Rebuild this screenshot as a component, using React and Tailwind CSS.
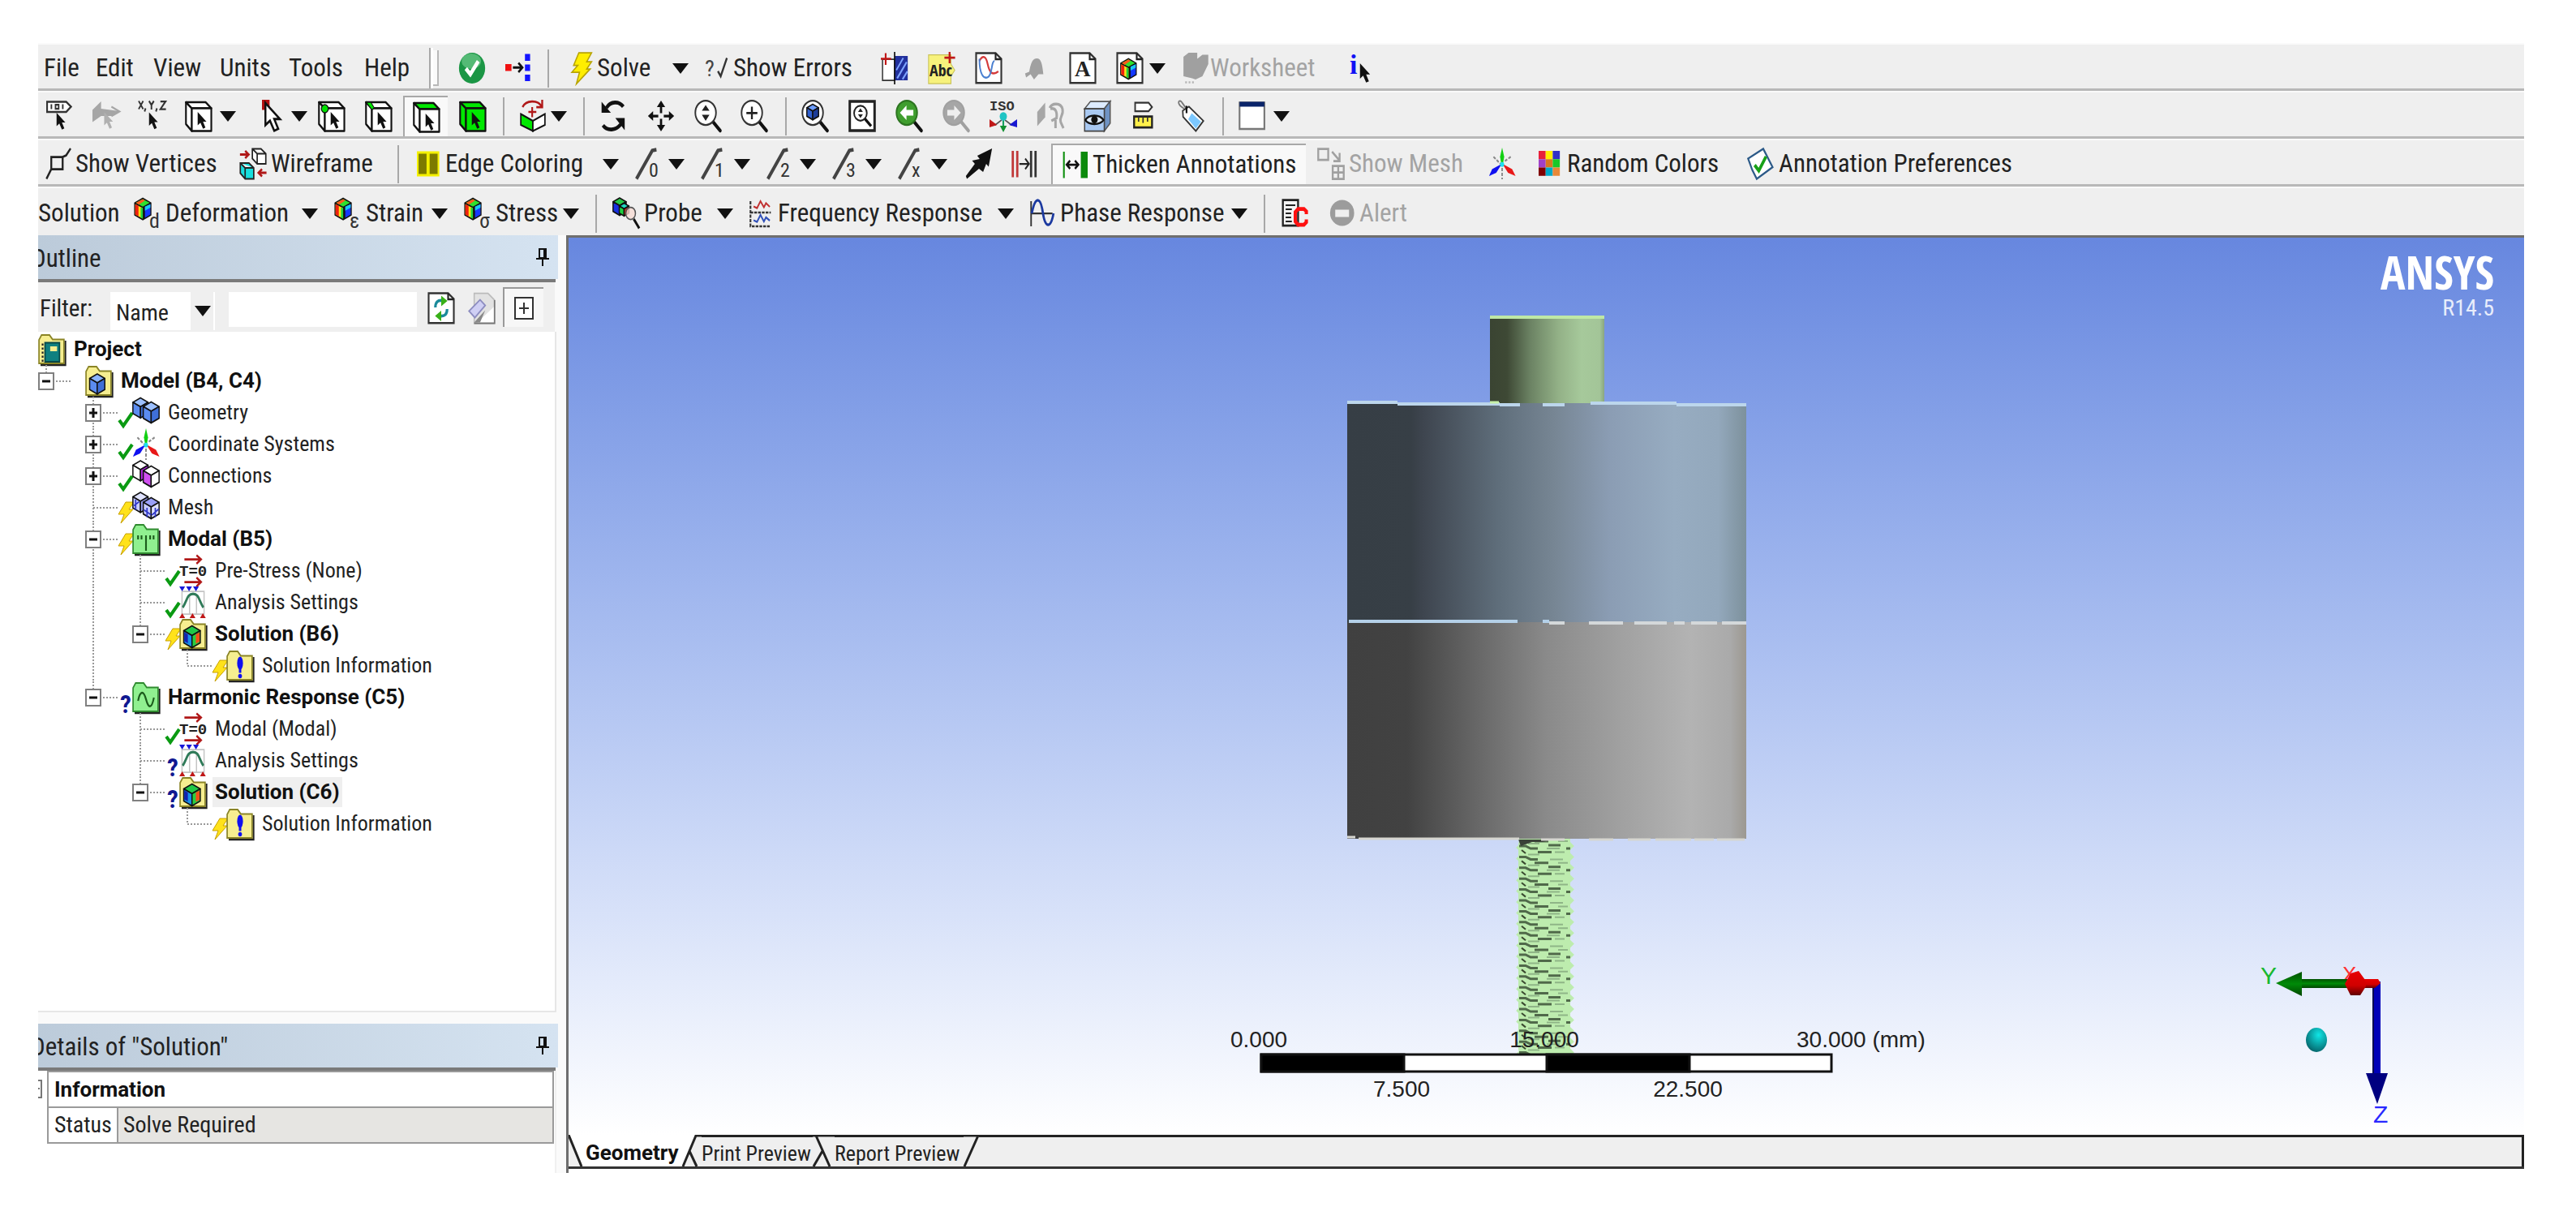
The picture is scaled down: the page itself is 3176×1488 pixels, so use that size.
import React, { useState } from "react";
import clsx from "clsx";

const UI = "font-['Roboto_Condensed','Open_Sans',sans-serif]";

/* Icons are drawn on a 16 x 16 grid, letters on top of it in plain pixels */
const Ico = ({ children, letters, className }) => (
  <svg viewBox="0 0 34 40" aria-hidden="true" className={clsx("w-[34px] h-[40px] shrink-0 overflow-visible", className)}>
    <g transform="scale(2.125 2.5)">{children}</g>
    {letters}
  </svg>
);

const Cursor = ({ x = 0, y = 0, fill = "#111", stroke = "none", s = 1 }) => (
  <path
    transform={`translate(${x} ${y}) scale(${s})`}
    d="M0 0v6.6l1.6-1.3 1.5 3 1.4-.6-1.4-2.9h2z"
    fill={fill}
    stroke={stroke}
    strokeWidth="0.7"
  />
);

const Cube = ({ x = 0, y = 0, s = 1, t = "#9cc0ff", l = "#5b8cf0", r = "#3f6fd8", stroke = "#111" }) => (
  <g transform={`translate(${x} ${y}) scale(${s})`} stroke={stroke} strokeWidth={0.7 / s} strokeLinejoin="round">
    <polygon points="4,0 8,2 4,4 0,2" fill={t} />
    <polygon points="0,2 4,4 4,9 0,7" fill={l} />
    <polygon points="8,2 4,4 4,9 8,7" fill={r} />
  </g>
);

const RainbowCube = ({ x = 0, y = 0, s = 1 }) => (
  <g transform={`translate(${x} ${y}) scale(${s})`}>
    <polygon points="4,0 8,2 8,7 4,9 0,7 0,2" fill="#111" />
    <polygon points="4,.6 7.2,2.1 4,3.6 .8,2.1" fill="#2ee02e" />
    <polygon points="4,.6 .8,2.1 2.2,2.8 5,1.2" fill="#ff5a1a" />
    <polygon points="5,3.6 7.5,2.6 7.5,6.7 5,8" fill="#1438ff" />
    <polygon points="5,3.6 7.5,2.6 7.5,4 5,5.2" fill="#18c8f0" />
    <polygon points=".5,2.6 4,4.2 4,8.3 .5,6.7" fill="#ffe11a" />
    <polygon points=".5,2.6 2,3.3 2,7.4 .5,6.7" fill="#f02010" />
    <polygon points="3,3.9 4,4.2 4,8.3 3,7.9" fill="#1fd43a" />
  </g>
);

const BoxOutline = ({ fill = "#fff", side = "#fff", top = "#fff" }) => (
  <g stroke="#111" strokeWidth="1" strokeLinejoin="round">
    <path d="M.6 1.2 4 4.2V15.4L.6 12Z" fill={side} />
    <path d="M.6 1.2H12L15.3 4.2H4Z" fill={top} />
    <path d="M4 4.2H15.3V15.4H4Z" fill={fill} />
  </g>
);

const Lens = ({ children, fill = "#fff", stroke = "#333", handle = "#111" }) => (
  <Ico>
    <path d="M10.5 10.5 15 15.2" stroke={handle} strokeWidth="1.8" strokeLinecap="round" />
    <ellipse cx="6.6" cy="6.4" rx="6" ry="6" fill={fill} stroke={stroke} strokeWidth="0.9" />
    {children}
  </Ico>
);

const Page = ({ children, letters }) => (
  <Ico letters={letters}>
    <path d="M.7.6H12L15.3 3.4V15.3H.7Z" fill="#fff" stroke="#333" strokeWidth="1" />
    <path d="M12 .6V3.6H15.3" fill="none" stroke="#222" strokeWidth="1" />
    {children}
  </Ico>
);

const Triad = () => (
  <>
    <path d="M3 4.5 7 8M13 4.5 9 7M8 10v5.6" stroke="#888" strokeWidth="0.9" strokeDasharray="1.6 .8" />
    <path d="M8 0 9.2 4.5 8.5 8h-1L6.8 4.5Z" fill="#12d012" />
    <path d="M7.8 8 4.6 12.4.4 14 2.2 10.6Z" fill="#1010f0" />
    <path d="M8.2 8 11.4 12.4 15.8 14 13.8 10.6Z" fill="#e81818" />
    <circle cx="8" cy="8.3" r="1.2" fill="#20dff0" />
  </>
);

const CheckIcon = () => (
  <Ico>
    <circle cx="8" cy="8" r="7.6" fill="#1b9645" />
    <ellipse cx="7.6" cy="4.6" rx="5.6" ry="3.8" fill="#6cc98a" opacity="0.7" />
    <path d="M4.4 8.2 7 11 11.6 4.6" fill="none" stroke="#fff" strokeWidth="2" />
  </Ico>
);

const FlowIcon = () => (
  <Ico>
    <path d="M0 6h3.6v3.4H0Z" fill="#f01010" />
    <path d="M4.4 7.7H9.6M7.6 5.4 9.9 7.7 7.6 10" fill="none" stroke="#111" strokeWidth="1.2" />
    <path d="M11.4 1h3v3.4h-3ZM11.4 6.2h3v3.2h-3ZM11.4 11.2h3v3.2h-3Z" fill="#1515ff" />
  </Ico>
);

const BoltIcon = () => (
  <Ico className="-mr-[6px]">
    <path d="M5 .4H12.4L9.6 4.8H12.4L9.6 8.4H11.6L3.6 15.8 5.4 10H1L4.4 6.6H2Z" fill="#ffee00" stroke="#b8a400" strokeWidth="0.7" />
  </Ico>
);

const ErrorsIcon = () => (
  <Ico className="-mr-1" letters={<text x="0" y="30" fontSize="28" fill="#444">?</text>}>
    <path d="M7.6 9.5 9.2 12 12.8 3" fill="none" stroke="#333" strokeWidth="1.1" />
  </Ico>
);

const SectionIcon = () => (
  <Ico>
    <path d="M1 3.6H8V14H1Z" fill="#fff" stroke="#333" strokeWidth="0.7" />
    <path d="M8 2H15.6V14H8Z" fill="#22309c" />
    <path d="M9 9 13 3M9.5 13 15 5M12.6 13.5 15.4 9.6" stroke="#7fa4ff" strokeWidth="0.9" />
    <path d="M8 0V16" stroke="#111" strokeWidth="0.8" />
    <path d="M2.8.6V6.4M0 3.4H6" stroke="#c01818" strokeWidth="1" />
  </Ico>
);

const AbcIcon = () => (
  <Ico letters={<text x="2" y="30" fontSize="20" fontWeight="700" fill="#222" className="font-['Open_Sans_Condensed','Open_Sans',sans-serif]">Abc</text>}>
    <path d="M.4 1.4H13.4V6L15.6 9 13.4 12V15.6H.4Z" fill="#f7f27c" stroke="#c9c25a" strokeWidth="0.5" />
    <path d="M12.6 0V5.6M9.6 2.8H15.8" stroke="#c01818" strokeWidth="1.1" />
  </Ico>
);

const ChartIcon = () => (
  <Page>
    <path d="M2.6 4.4C4.6 1.4 6.4 2 7.4 6S10 12 13.6 9.6" fill="none" stroke="#d43a3a" strokeWidth="1" />
    <path d="M2.6 3.4C2.6 11 5 13.6 7.6 12.4S9.4 4.6 11.4 4.4" fill="none" stroke="#4a7fd0" strokeWidth="0.9" />
  </Page>
);

const GrayBellIcon = () => (
  <Ico>
    <path d="M8.6 3.2c2.6 0 3.2 3 3.8 7.8H9.6L7 13.6 5 11 2.4 12.6 1.8 10.6 4.2 9.8C5 6 6 3.2 8.6 3.2Z" fill="#a0a0a0" />
  </Ico>
);

const LetterIcon = () => (
  <Page letters={<text x="7" y="30" fontSize="27" fontWeight="700" fill="#222" className="font-['Liberation_Serif',serif]">A</text>} />
);

const ColorPageIcon = () => (
  <Page>
    <RainbowCube x={2.4} y={3} s={1.2} />
  </Page>
);

const WorksheetIcon = () => (
  <Ico className="-mr-1">
    <path d="M1 2.4 4 .4H9V3.4L12 1.4H15.4V6L12 12 8 13.6 6 13 1 12Z" fill="#a0a0a0" />
    <path d="M2 15H8" stroke="#b5b5b5" strokeDasharray="1 1" />
  </Ico>
);

const InfoIcon = () => (
  <Ico letters={<text x="0" y="27" fontSize="34" fontWeight="700" fill="#1212f5" className="font-['Liberation_Serif',serif]">i</text>}>
    <Cursor x={6} y={5.6} s={1.15} />
  </Ico>
);

const TagCursorIcon = () => (
  <Ico>
    <path d="M.5 1H11.6L14.4 3.4 11.6 6H.5Z" fill="#fff" stroke="#333" strokeWidth="1" />
    <path d="M3 2.2v2.4M9.6 2.2v2.4M5.4 2.4h1.8v2H5.4Z" fill="none" stroke="#333" strokeWidth="0.9" />
    <Cursor x={6} y={6.4} />
  </Ico>
);

const GrayCursorIcon = () => (
  <Ico>
    <path d="M0 5 5 .8V4.4L15.6 5.6 12 8H5L0 11Z" fill="#a6a6a6" />
    <path d="M11 3.4 15.6 5.8 11 8" fill="none" stroke="#a6a6a6" />
    <Cursor x={6.8} y={6} fill="#b0b0b0" />
  </Ico>
);

const XyzIcon = () => (
  <Ico>
    <path d="M0 .6 2.6 4.6M2.6.6 0 4.6M6 .6 7.4 2.6 8.8.6M7.4 2.6V4.8M12.6.8H15.6L12.6 4.6H15.8M4 4.2 3.4 5.8M10.6 4.2 10 5.8" fill="none" stroke="#333" strokeWidth="0.9" />
    <Cursor x={6} y={6.2} />
  </Ico>
);

const BoxCursorIcon = () => (
  <Ico>
    <BoxOutline />
    <Cursor x={7.4} y={6} />
  </Ico>
);

const RedCursorIcon = () => (
  <Ico className="-mr-[3px]">
    <path d="M0 0H4.4V5H0Z" fill="#b01010" />
    <Cursor x={2} y={1.6} s={1.65} fill="#fff" stroke="#111" />
  </Ico>
);

const VertexIcon = () => (
  <Ico>
    <BoxOutline />
    <Cursor x={7.4} y={6} />
    <circle cx="4" cy="4.4" r="2" fill="#00e000" stroke="#111" strokeWidth="0.6" />
  </Ico>
);

const EdgeIcon = () => (
  <Ico>
    <BoxOutline />
    <path d="M.6 1.2H3.4L5.4 4 4 5Z" fill="#00e000" stroke="#111" strokeWidth="0.5" />
    <Cursor x={7.4} y={6} />
  </Ico>
);

const FaceIcon = () => (
  <Ico>
    <BoxOutline top="#00e800" />
    <Cursor x={7.4} y={6.4} />
  </Ico>
);

const BodyIcon = () => (
  <Ico>
    <BoxOutline fill="#00e800" side="#00e800" top="#00e800" />
    <Cursor x={7.4} y={6} />
  </Ico>
);

const ExtendIcon = () => (
  <Ico>
    <path d="M1 7 8 10.4V15.4L1 12.4Z" fill="#00e800" stroke="#111" strokeWidth="0.8" />
    <path d="M15 7 8 10.4V15.4L15 12.4Z" fill="#fff" stroke="#111" strokeWidth="0.8" />
    <path d="M2 3.6C4 0 11 0 13 3.2M13.4 0V3.6H10" fill="none" stroke="#b01818" strokeWidth="1.1" />
    <path d="M7.6 3.6v5M5.4 6h4.6" stroke="#b01818" strokeWidth="1" />
  </Ico>
);

const RotateIcon = () => (
  <Ico>
    <path d="M13.4 3.4C11 .6 6 .6 3.6 4" fill="none" stroke="#111" strokeWidth="1.9" />
    <path d="M.8 1V6.4H6.2Z" fill="#111" />
    <path d="M1.6 12.6C4 15.4 9 15.4 12 12" fill="none" stroke="#111" strokeWidth="1.9" />
    <path d="M14.2 15V9H8.8Z" fill="#111" />
  </Ico>
);

const PanIcon = () => (
  <Ico>
    <path d="M8 .4 10.4 3.6H5.6ZM8 15.6 10.4 12.4H5.6ZM.4 8 3.4 5.6V10.4ZM15.6 8 12.6 5.6V10.4Z" fill="#111" />
    <path d="M8 3v3.6M8 9.4V13M3 8h3.4M9.6 8H13" stroke="#111" strokeWidth="1.3" />
  </Ico>
);

const ZoomIcon = () => (
  <Lens>
    <path d="M6.6 2.6 8.8 5.4H4.4ZM6.6 10.4 8.8 7.4H4.4Z" fill="#222" />
  </Lens>
);

const ZoomPlusIcon = () => (
  <Lens>
    <path d="M6.6 3.4v6.2M3.4 6.5h6.4" stroke="#222" strokeWidth="1.1" />
  </Lens>
);

const ZoomFitIcon = () => (
  <Lens>
    <Cube x={3.2} y={2.2} s={0.85} l="#3060d0" r="#1c3c98" t="#6c9cff" />
  </Lens>
);

const ZoomBoxIcon = () => (
  <Ico>
    <path d="M.8.8H15.2V15.2H.8Z" fill="#fff" stroke="#222" strokeWidth="1.4" />
    <circle cx="7" cy="6.6" r="3.7" fill="#fff" stroke="#222" strokeWidth="0.9" />
    <path d="M9.6 9.4 13.2 13" stroke="#111" strokeWidth="1.5" />
    <path d="M7 4.2 8.4 6H5.6ZM7 9 8.4 7.2H5.6Z" fill="#222" />
  </Ico>
);

const ZoomBackIcon = () => (
  <Lens fill="#3f9e2e" stroke="#2c7420">
    <path d="M2.6 6.4 6.4 2.8V5H10.4V7.8H6.4V10Z" fill="#fff" />
  </Lens>
);

const ZoomNextIcon = () => (
  <Lens fill="#a6a6a6" stroke="#a0a0a0" handle="#a0a0a0">
    <path d="M10.6 6.4 6.8 2.8V5H2.8V7.8H6.8V10Z" fill="#efefef" />
  </Lens>
);

const IsoIcon = () => (
  <Ico letters={<text x="0" y="13" fontSize="17" fontWeight="700" fill="#333" className="font-['Liberation_Mono',monospace]">ISO</text>}>
    <path d="M8 8V14" stroke="#18a060" strokeWidth="1" />
    <path d="M8 16 6 12.8H10Z" fill="#109030" />
    <path d="M7 10 3 12.6M9 10 13 12.6" stroke="#555" strokeWidth="0.8" />
    <path d="M16 9.6V13.6L11.4 12.4Z" fill="#1818d0" />
    <path d="M0 9.6V13.6L4.4 12.4Z" fill="#c01818" />
    <circle cx="8" cy="8.2" r="2.1" fill="#1fc4c4" />
  </Ico>
);

const GrayLookIcon = () => (
  <Ico>
    <path d="M.4 6 5 1.4V8.6L.4 13Z" fill="#a6a6a6" />
    <path d="M7.6 4C9 1.4 14 1.4 15 4.4 16 8 13 8 14 11l1.6 3M8 4.4c3-.6 4 1.4 3.6 4.6l-3 1.4M11 10v4" fill="none" stroke="#a6a6a6" strokeWidth="1.4" />
  </Ico>
);

const EyeBoxIcon = () => (
  <Ico>
    <path d="M.6 4.4 4 .8H15.4L12 4.4Z" fill="#dcebff" stroke="#555" strokeWidth="0.7" />
    <path d="M12 4.4 15.4.8V11.6L12 15.4Z" fill="#6f93c4" stroke="#555" strokeWidth="0.7" />
    <path d="M.6 4.4H12V15.4H.6Z" fill="#a9c9f2" stroke="#444" strokeWidth="0.7" />
    <path d="M1 10C3 7 9.4 7 11.6 10 9.4 12.6 3 12.6 1 10Z" fill="#dfeaf8" stroke="#111" strokeWidth="1" />
    <circle cx="6.3" cy="9.8" r="1.9" fill="#111" />
  </Ico>
);

const RulerIcon = () => (
  <Ico>
    <path d="M2.6 1.4H10.4L12.4 3.6 10.4 5.6H2.6Z" fill="#fff" stroke="#333" strokeWidth="0.9" />
    <path d="M2 8.2H12.4V13.6H2Z" fill="#fff04a" stroke="#222" strokeWidth="1.1" />
    <path d="M4.6 8.4v2.4M7.2 8.4v3M9.8 8.4v2.4" stroke="#333" strokeWidth="0.8" />
  </Ico>
);

const TagIcon = () => (
  <Ico>
    <path d="M5 5 2 3C0 1 1.6-.4 3 1.4L6 5" fill="none" stroke="#777" strokeWidth="0.8" />
    <path d="M3.4 5.4 7 3.4 15.4 10.4 11 15.4 3.6 8.4Z" fill="#fff" stroke="#333" strokeWidth="0.8" />
    <path d="M8.6 6.6 14 10.8 11 14.2 6.6 9.6Z" fill="#7cc8ff" />
    <path d="M5.6 3v3.6" stroke="#111" strokeWidth="1" />
  </Ico>
);

const WindowIcon = () => (
  <Ico>
    <path d="M.6 1.4H15V14.4H.6Z" fill="#fff" stroke="#777" strokeWidth="1" />
    <path d="M.6 1H15V3.4H.6Z" fill="#0a246a" />
  </Ico>
);

const VerticesIcon = () => (
  <Ico className="-mr-[2px]">
    <path d="M3.4 4.6H10V10.6H3.4ZM3.4 10.6.6 15.4M10 4.6 12 3.8 14.6.4" fill="none" stroke="#222" strokeWidth="1.1" />
  </Ico>
);

const WireframeIcon = () => (
  <Ico>
    <path d="M.4 3.4H5M3.4 1.6 5.4 3.4 3.4 5.2M15.8 12.4H11.6M13.2 10.6 11.2 12.4 13.2 14.2" fill="none" stroke="#b01818" strokeWidth="1.2" />
    <path d="M7.6.6H12.6L15.4 3V8H10.4L7.6 5.4ZM7.6.6 10.4 3H15.4M10.4 3V8" fill="#fff" stroke="#222" strokeWidth="0.8" />
    <path d="M.6 7.6H5.6L8.4 10V15.4H3.4L.6 12.6ZM.6 7.6 3.4 10H8.4M3.4 10V15.4" fill="#18dede" stroke="#222" strokeWidth="0.8" />
  </Ico>
);

const EdgeColorIcon = () => (
  <Ico className="-mr-1">
    <path d="M0 1.8H13V14.2H0Z" fill="#f4f000" />
    <path d="M1 3H5.6V13H1ZM7.4 3H12V13H7.4Z" fill="#7c7a00" />
  </Ico>
);

const EdgeNumberIcon = ({ n }) => (
  <Ico letters={<text x="17" y="36" fontSize="24" fill="#333">{n}</text>}>
    <path d="M.8 15.4 10 1.4 12.4 1" fill="none" stroke="#444" strokeWidth="1.8" />
  </Ico>
);

const NeedleIcon = () => (
  <Ico>
    <path d="M15.6.4 13.6 9.4 12.2 8 10.4 12 8 10.4 1 15.4.4 14 5.6 8 4 6.4 8.4 5.6 7 4Z" fill="#111" />
  </Ico>
);

const MergeIcon = () => (
  <Ico>
    <path d="M.8 1.6V14.6M3.4 1.6V14.6" stroke="#c03838" strokeWidth="1.3" />
    <path d="M11.4 1.6V14.6M14 1.6V14.6" stroke="#333" strokeWidth="1.3" />
    <path d="M4.6 8H10M8 5.4 10.2 8 8 10.6" fill="none" stroke="#222" strokeWidth="0.9" />
  </Ico>
);

const ThickenIcon = () => (
  <Ico className="-mr-[2px]">
    <path d="M.8 1.6V14.6" stroke="#109010" strokeWidth="1" />
    <path d="M2.6 8H9M4.4 6 2.4 8 4.4 10M7.2 6 9.2 8 7.2 10" fill="none" stroke="#111" strokeWidth="1.1" />
    <path d="M10.6 1.6H14.6V14.6H10.6Z" fill="#0b8a0b" />
  </Ico>
);

const MeshToggleIcon = () => (
  <Ico>
    <path d="M.6.6H6.4V6H.6ZM9 9H15.4V15.4H9ZM12.2 9V15.4M9 12.2H15.4M8.6 2 13 6.4M13 2.6V6.6H9.4" fill="none" stroke="#a0a0a0" strokeWidth="1.1" />
  </Ico>
);

const RandomColorsIcon = () => (
  <Ico className="-mr-1">
    {["#e8203a", "#ffee00", "#3030c8", "#a040c8", "#d87820", "#18c828", "#800000", "#00a8c8", "#e88838"].map((c, i) => (
      <rect key={c} x={(i % 3) * 4.1} y={1.6 + Math.floor(i / 3) * 4.1} width="4.1" height="4.1" fill={c} />
    ))}
  </Ico>
);

const PreferencesIcon = () => (
  <Ico>
    <path d="M.6 5.4 9.4.6 14.8 9.6 5.6 15.4 3 11Z" fill="#fff" stroke="#2c5a88" strokeWidth="1" />
    <path d="M4.4 8.6 6.8 11.4 11 4.4" fill="none" stroke="#18a018" strokeWidth="1.7" />
  </Ico>
);

const ResultIcon = ({ n }) => (
  <Ico letters={<text x="19" y="38" fontSize="26" fill="#333">{n}</text>}>
    <RainbowCube x={0.2} y={0.2} s={1.25} />
  </Ico>
);

const ProbeIcon = () => (
  <Ico>
    <Cube x={0.4} y={0.4} s={0.95} l="#1830e0" t="#28c848" r="#1a9030" />
    <Cube x={4} y={3} s={0.7} l="#20d040" t="#20d8c0" r="#d03020" />
    <ellipse cx="10.6" cy="8" rx="2.8" ry="3" fill="#f6dcd4" fillOpacity="0.8" stroke="#555" strokeWidth="0.7" />
    <path d="M12.4 10.8 15.6 15.4" stroke="#111" strokeWidth="1.3" />
  </Ico>
);

const FrequencyIcon = () => (
  <Ico className="-mr-1">
    <path d="M.6 2V14.4H12.4M.6 7.6H12.4" fill="none" stroke="#333" strokeWidth="1" strokeDasharray="1.6 .6" />
    <path d="M2.4 4.6 4.4 5.4 6.4 2 8.4 5 9.6 3 11.8 4.8" fill="none" stroke="#c03030" strokeWidth="0.9" />
    <path d="M2.4 11.4 4.4 12.2 6.4 8.8 8.4 12 9.6 10 11.8 11.6" fill="none" stroke="#3050b8" strokeWidth="0.9" />
  </Ico>
);

const PhaseIcon = () => (
  <Ico className="-mr-[2px]">
    <path d="M.6 2V14.4M.6 8H13" fill="none" stroke="#333" strokeWidth="0.9" />
    <path d="M1 8C3-.6 6-.4 7.4 7.6S12 15.6 13.6 8" fill="none" stroke="#1c3aa0" strokeWidth="1.3" />
  </Ico>
);

const ClipCIcon = () => (
  <Ico>
    <path d="M.8 1.4H9.6V14H.8Z" fill="#f4f4f4" stroke="#222" strokeWidth="1.1" />
    <path d="M2.4 4H8M2.4 6H6M2.4 8H5.6M2.4 10H5.6M2.4 12H6" stroke="#222" strokeWidth="0.8" />
    <path d="M14.4 8.4V7L13 5.8H9.6L8 7.4V12L9.6 13.6H13L14.4 12.4V11" fill="none" stroke="#ff1010" strokeWidth="1.9" />
  </Ico>
);

const AlertIcon = () => (
  <Ico className="-mr-[2px]">
    <ellipse cx="7.4" cy="7.8" rx="7" ry="6.4" fill="#9c9c9c" />
    <path d="M3.4 6.2H11.4V9.8H3.4Z" fill="#efefef" />
  </Ico>
);

const Arrow = ({ className }) => (
  <svg viewBox="0 0 20 13" aria-hidden="true" className={clsx("w-[20px] h-[13px] shrink-0", className)}>
    <path d="M0 0H20L10 13Z" fill="#111" />
  </svg>
);

const Pin = () => (
  <svg viewBox="0 0 16 22" aria-hidden="true" className="w-[16px] h-[22px]">
    <path d="M4 1H12V12H4ZM0 13H16M8 13V22" fill="none" stroke="#111" strokeWidth="2" />
    <path d="M9 1H13V12H9Z" fill="#111" />
  </svg>
);

const Tool = ({ icon, label, title, menu, disabled, pressed, className }) => (
  <button
    type="button"
    disabled={disabled}
    aria-pressed={pressed}
    aria-label={label ? undefined : title}
    className={clsx(
      "flex items-center gap-[5px] shrink-0 h-full whitespace-nowrap text-[31px] leading-[36px]",
      disabled ? "text-[#a3a3a3]" : "text-[#222]",
      pressed && "bg-[#f9f9f9] border-t-2 border-l-2 border-[#a8a8a8]",
      menu && "pr-5",
      className
    )}
  >
    {icon}
    {label && <span>{label}</span>}
    {menu && <Arrow className="ml-auto" />}
  </button>
);

const Sep = ({ className }) => (
  <div className={clsx("shrink-0 h-[47px] border-l-2 border-[#a8a8a8]", className)} />
);

const Bar = ({ children, className }) => (
  <div
    className={clsx(
      "flex items-center h-[59px] pt-[4px] bg-[#efefef] border-t-2 border-t-[#fafafa] border-b-[3px] border-b-[#b8b8b8] overflow-hidden",
      className
    )}
  >
    {children}
  </div>
);

const menus = [
  ["File", "w-[64px]"],
  ["Edit", "w-[71px]"],
  ["View", "w-[82px]"],
  ["Units", "w-[85px]"],
  ["Tools", "w-[93px]"],
  ["Help", "w-[80px]"],
];

const Toolbars = () => (
  <header>
    <Bar className="pl-[7px]">
      <nav className="flex">
        {menus.map(([name, w]) => (
          <button key={name} type="button" className={clsx("text-left text-[31px] leading-[36px] text-[#222]", w)}>
            {name}
          </button>
        ))}
      </nav>
      <div className="h-full w-[5px] border-l-2 border-[#a8a8a8] bg-white" />
      <div className="h-[44px] w-[7px] mr-[24px] border-r-2 border-b-2 border-[#b8b8b8] bg-[#fafafa]" />
      <Tool icon={<CheckIcon />} title="Ready" className="w-[58px]" />
      <Tool icon={<FlowIcon />} title="Connect" className="w-[52px]" />
      <Sep className="w-[28px]" />
      <Tool icon={<BoltIcon />} label="Solve" menu className="w-[166px]" />
      <Tool icon={<ErrorsIcon />} label="Show Errors" className="w-[217px]" />
      <Tool icon={<SectionIcon />} title="Section plane" className="w-[58px]" />
      <Tool icon={<AbcIcon />} title="Annotation" className="w-[58px]" />
      <Tool icon={<ChartIcon />} title="Chart" className="w-[58px]" />
      <Tool icon={<GrayBellIcon />} title="Comment" disabled className="w-[58px]" />
      <Tool icon={<LetterIcon />} title="Figure text" className="w-[58px]" />
      <Tool icon={<ColorPageIcon />} title="Image" menu className="w-[81px]" />
      <Tool icon={<WorksheetIcon />} label="Worksheet" disabled className="w-[207px]" />
      <Tool icon={<InfoIcon />} title="Selection information" />
    </Bar>

    <Bar className="pl-[10px]">
      <Tool icon={<TagCursorIcon />} title="Label" className="w-[57px]" />
      <Tool icon={<GrayCursorIcon />} title="Direction" disabled className="w-[57px]" />
      <Tool icon={<XyzIcon />} title="Hit point coordinates" className="w-[57px]" />
      <Tool icon={<BoxCursorIcon />} title="Select type" menu className="w-[83px]" />
      <Tool icon={<RedCursorIcon />} title="Select mode" menu className="w-[69px] ml-3" />
      <Tool icon={<VertexIcon />} title="Vertex" className="w-[58px]" />
      <Tool icon={<EdgeIcon />} title="Edge" className="w-[47px]" />
      <Tool icon={<FaceIcon />} title="Face" pressed className="w-[55px] justify-center" />
      <Tool icon={<BodyIcon />} title="Body" className="w-[54px] ml-[14px]" />
      <Sep className="w-[20px]" />
      <Tool icon={<ExtendIcon />} title="Extend" menu className="w-[79px]" />
      <Sep className="w-[21px]" />
      <Tool icon={<RotateIcon />} title="Rotate" className="w-[58px]" />
      <Tool icon={<PanIcon />} title="Pan" className="w-[58px]" />
      <Tool icon={<ZoomIcon />} title="Zoom" className="w-[57px]" />
      <Tool icon={<ZoomPlusIcon />} title="Box zoom" className="w-[55px]" />
      <Sep className="w-[20px]" />
      <Tool icon={<ZoomFitIcon />} title="Zoom to fit" className="w-[58px]" />
      <Tool icon={<ZoomBoxIcon />} title="Magnifier" className="w-[58px]" />
      <Tool icon={<ZoomBackIcon />} title="Previous view" className="w-[58px]" />
      <Tool icon={<ZoomNextIcon />} title="Next view" disabled className="w-[58px]" />
      <Tool icon={<IsoIcon />} title="Isometric view" className="w-[58px]" />
      <Tool icon={<GrayLookIcon />} title="Look at" disabled className="w-[58px]" />
      <Tool icon={<EyeBoxIcon />} title="Manage views" className="w-[58px]" />
      <Tool icon={<RulerIcon />} title="Rescale annotation" className="w-[57px]" />
      <Tool icon={<TagIcon />} title="Tags" className="w-[56px]" />
      <Sep className="w-[20px]" />
      <Tool icon={<WindowIcon />} title="Viewports" menu className="w-[83px]" />
    </Bar>

    <Bar className="pl-[9px]">
      <Tool icon={<VerticesIcon />} label="Show Vertices" className="w-[239px]" />
      <Tool icon={<WireframeIcon />} label="Wireframe" className="w-[195px]" />
      <Sep className="w-[24px]" />
      <Tool icon={<EdgeColorIcon />} label="Edge Coloring" menu className="w-[269px]" />
      {["0", "1", "2", "3", "x"].map((n) => (
        <Tool key={n} icon={<EdgeNumberIcon n={n} />} title={`Edges ${n}`} menu className="w-[81px]" />
      ))}
      <Tool icon={<NeedleIcon />} title="Edge direction" className="w-[57px] ml-[2px]" />
      <Tool icon={<MergeIcon />} title="Coincident edges" className="w-[49px]" />
      <Tool icon={<ThickenIcon />} label="Thicken Annotations" pressed className="w-[314px] pl-[12px]" />
      <Tool icon={<MeshToggleIcon />} label="Show Mesh" disabled className="w-[211px] ml-[14px]" />
      <Tool icon={<Ico><Triad /></Ico>} title="Coordinate axes" className="w-[62px]" />
      <Tool icon={<RandomColorsIcon />} label="Random Colors" className="w-[257px]" />
      <Tool icon={<PreferencesIcon />} label="Annotation Preferences" />
    </Bar>

    <div className="flex items-center h-[60px] pt-1 bg-[#efefef] border-t-2 border-[#fafafa] overflow-hidden">
      <span className="w-[118px] shrink-0 text-[31px] leading-[36px] text-[#222]">Solution</span>
      <Tool icon={<ResultIcon n="d" />} label="Deformation" menu className="w-[247px]" />
      <Tool icon={<ResultIcon n="ε" />} label="Strain" menu className="w-[160px]" />
      <Tool icon={<ResultIcon n="σ" />} label="Stress" menu className="w-[162px]" />
      <Sep className="w-[21px]" />
      <Tool icon={<ProbeIcon />} label="Probe" menu className="w-[169px]" />
      <Tool icon={<FrequencyIcon />} label="Frequency Response" menu className="w-[346px]" />
      <Tool icon={<PhaseIcon />} label="Phase Response" menu className="w-[288px]" />
      <Sep className="w-[22px]" />
      <Tool icon={<ClipCIcon />} title="Clear" className="w-[59px]" />
      <Tool icon={<AlertIcon />} label="Alert" disabled />
    </div>
  </header>
);

/* Tree */

const Folder = ({ fill = "#f6ee90", edge = "#8a8426", children, letters }) => (
  <Ico letters={letters}>
    <path d="M1.4 15.6H15.8V3.6" fill="none" stroke="#222" strokeWidth="1" />
    <path d="M.5 3.2 2 .8H6.6L8.4 3H15V14.8H.5Z" fill={fill} stroke={edge} strokeWidth="0.8" />
    {children}
  </Ico>
);

const treeIcons = {
  project: (
    <Folder>
      <path d="M4 4.6H12.4V14H4Z" fill="#0f8080" stroke="#064848" strokeWidth="0.8" />
      <path d="M7 6.4H11V8.8H7Z" fill="#f6ee90" />
      <path d="M2.6 5V14" stroke="#222" strokeDasharray="1 1" />
    </Folder>
  ),
  model: (
    <Folder>
      <Cube x={2.6} y={4.4} s={1.1} t="#8ab4ff" />
    </Folder>
  ),
  geometry: (
    <Ico>
      <Cube x={0.4} y={0.6} s={1.1} />
      <Cube x={6.4} y={2.6} s={1.15} />
    </Ico>
  ),
  axes: <Ico><Triad /></Ico>,
  connections: (
    <Ico>
      <Cube x={0.4} y={0.4} s={1.1} l="#fff" r="#b828e8" t="#fff" />
      <Cube x={6.4} y={3} s={1.15} l="#d050f0" r="#fff" t="#fff" />
    </Ico>
  ),
  mesh: (
    <Ico>
      <Cube x={0.4} y={0.4} s={1.1} l="#c8ccff" r="#9aa0f8" t="#dfe2ff" />
      <Cube x={6.4} y={3} s={1.15} l="#c8ccff" r="#dfe2ff" t="#9aa0f8" />
      <path d="M2 4v5M4 5l-3 2M8.6 8v4.6M6.8 9l4 2.4M13.4 8v4.6M11.4 11.6 15.4 8.6" stroke="#3038c8" strokeWidth="0.8" />
    </Ico>
  ),
  modal: (
    <Folder fill="#90f090" edge="#2f8a2f">
      <path d="M8 6V13.6M3.4 6v2M5.4 6v2M10.4 6v2M12.4 6v2" stroke="#1c5c1c" strokeWidth="1" />
    </Folder>
  ),
  harmonic: (
    <Folder fill="#90f090" edge="#2f8a2f">
      <path d="M3.4 9.6C4.6 4.4 6.6 4.4 8 8.8S11.2 14 12.6 8" fill="none" stroke="#1c5c1c" strokeWidth="1" />
    </Folder>
  ),
  prestress: (
    <Ico letters={<text x="0" y="26" fontSize="19" fontWeight="700" fill="#222" className="font-['Liberation_Mono',monospace]">T=0</text>}>
      <path d="M3 2.2H12M10 .2 12.6 2.2 10 4.4M3 13.4H12M10 11.2 12.6 13.4 10 15.6" fill="none" stroke="#b01818" strokeWidth="1.1" />
    </Ico>
  ),
  settings: (
    <Ico>
      <path d="M1.6 2.4H14.4V13.6H1.6ZM6 4V13.6M10 4V13.6" fill="#fff" stroke="#c4c4c4" strokeWidth="0.7" />
      <path d="M2 10.4C4.6 7 4.6 3.6 8 3.6S11.4 7 14 10.4" fill="none" stroke="#2f7a58" strokeWidth="1.3" />
      <path d="M0 0H3.4L1.7 2.4ZM4 0H7.4L5.7 2.4ZM8 0H11.4L9.7 2.4Z" fill="#1818d8" />
      <path d="M0 15.6H3.4L1.7 13.2ZM6 15.6H9.4L7.7 13.2ZM12 15.6H15.4L13.7 13.2Z" fill="#c01818" />
    </Ico>
  ),
  solution: (
    <Folder>
      <Cube x={2.6} y={3.8} s={1.2} t="#20c848" l="#1890e8" r="#28d040" />
      <path d="M11.8 7 9.6 8V12.6L11.8 11.6Z" fill="#f05018" />
      <path d="M3 7 5 8V12.4L3 11.4Z" fill="#1420b0" />
    </Folder>
  ),
  info: (
    <Folder>
      <ellipse cx="8" cy="6.6" rx="1.7" ry="3.2" fill="#1010f0" />
      <path d="M8 8v3.4" stroke="#1010f0" strokeWidth="1.4" />
      <circle cx="8" cy="13" r="1.1" fill="#1010f0" />
    </Folder>
  ),
};

/* guides: " " nothing, "|" passes through, "T" branch, "L" last branch */
const nodes = [
  { label: "Project", icon: "project", guides: "", bold: true },
  { label: "Model (B4, C4)", icon: "model", guides: "L", box: "-", bold: true },
  { label: "Geometry", icon: "geometry", guides: " T", box: "+", status: "ok" },
  { label: "Coordinate Systems", icon: "axes", guides: " T", box: "+", status: "ok" },
  { label: "Connections", icon: "connections", guides: " T", box: "+", status: "ok" },
  { label: "Mesh", icon: "mesh", guides: " T", status: "solve" },
  { label: "Modal (B5)", icon: "modal", guides: " T", box: "-", status: "solve", bold: true },
  { label: "Pre-Stress (None)", icon: "prestress", guides: " |T", status: "ok" },
  { label: "Analysis Settings", icon: "settings", guides: " |T", status: "ok" },
  { label: "Solution (B6)", icon: "solution", guides: " |L", box: "-", status: "solve", bold: true },
  { label: "Solution Information", icon: "info", guides: " | L", status: "solve" },
  { label: "Harmonic Response (C5)", icon: "harmonic", guides: " L", box: "-", status: "ask", bold: true },
  { label: "Modal (Modal)", icon: "prestress", guides: "  T", status: "ok" },
  { label: "Analysis Settings", icon: "settings", guides: "  T", status: "ask" },
  { label: "Solution (C6)", icon: "solution", guides: "  L", box: "-", status: "ask", bold: true, selected: true },
  { label: "Solution Information", icon: "info", guides: "   L", status: "solve" },
];

const Guide = ({ kind, box, status }) => {
  const own = kind === "T" || kind === "L";
  const dots = { stroke: "#999", strokeWidth: 2, strokeDasharray: "2 2" };
  return (
    <svg viewBox="0 -20 58 39" aria-hidden="true" className="w-[58px] h-[39px] shrink-0 overflow-visible">
      {kind !== " " && <line x1="10" x2="10" y1="-20" y2={kind === "L" ? 0 : 19} {...dots} />}
      {own && <line x1="10" x2="42" y1="0" y2="0" {...dots} />}
      {own && box && (
        <>
          <rect x="1" y="-10" width="18" height="20" fill="#fff" stroke="#808080" strokeWidth="2" />
          <path d={box === "+" ? "M5 0H15M10-6V6" : "M5 0H15"} stroke="#111" strokeWidth="3" />
        </>
      )}
      {own && status === "ok" && <path d="M42 9 47 16 58 0" fill="none" stroke="#0a9a12" strokeWidth="4" />}
      {own && status === "solve" && (
        <path d="M50-7H60L54 2H59L44 19 48 8H41Z" fill="#ffe21a" stroke="#c8a000" strokeWidth="1" />
      )}
      {own && status === "ask" && (
        <text x="43" y="19" fontSize="31" fontWeight="700" fill="#101890">?</text>
      )}
    </svg>
  );
};

const Tree = () => {
  const [selected, setSelected] = useState(nodes.findIndex((n) => n.selected));
  return (
    <ul className="pt-[2px]">
      {nodes.map((n, i) => (
        <li key={i} className="flex items-center h-[39px]">
          {[...n.guides].map((g, k) => (
            <Guide key={k} kind={g} box={n.box} status={n.status} />
          ))}
          {treeIcons[n.icon]}
          <button
            type="button"
            onClick={() => setSelected(i)}
            className={clsx(
              "ml-[7px] px-[3px] h-[37px] whitespace-nowrap text-[26px] leading-[37px]",
              n.bold ? "font-bold text-[#111] font-['Roboto','Open_Sans',sans-serif]" : "text-[#222]",
              i === selected && "bg-[#efefef]"
            )}
          >
            {n.label}
          </button>
        </li>
      ))}
    </ul>
  );
};

const PaneTitle = ({ children }) => (
  <div className="mr-[10px]">
    <div className="flex items-center justify-between h-[54px] pr-[11px] bg-linear-to-r from-[#bccbda] to-[#d5e3f1]">
      <h2 className="-ml-[9px] pt-[4px] whitespace-nowrap text-[31px] leading-[36px] text-[#222]">{children}</h2>
      <Pin />
    </div>
    <div className="h-[4px] mr-[3px] bg-[#7a7a7a]" />
  </div>
);

const FilterBar = () => (
  <div className="flex items-start h-[61px] mr-[14px] pt-3 bg-[#efefef]">
    <label htmlFor="filter" className="w-[89px] pl-[2px] pt-[2px] text-[29px] leading-[36px] text-[#222]">
      Filter:
    </label>
    <div className="flex items-center w-[129px] h-[47px] pr-[3px] bg-[#efefef] border-r-2 border-white">
      <select id="filter" className="appearance-none w-[99px] h-full pl-[7px] pt-[5px] bg-white text-[28px] leading-[36px] text-[#222]">
        <option>Name</option>
      </select>
      <Arrow className="ml-auto" />
    </div>
    <input type="text" aria-label="Filter text" className="w-[232px] h-[43px] ml-[17px] bg-white" />
    <button type="button" aria-label="Refresh" className="ml-[13px] w-[50px]">
      <Page>
        <path d="M4.6 7.6C4.6 5 6 4 8.4 4.2M11.4 8.4C11.4 11 10 12 7.6 11.8" fill="none" stroke="#1a8a9a" strokeWidth="1.5" />
        <path d="M8 1.8 11.6 4.4 8 7ZM8 9.2 4.4 11.8 8 14.4Z" fill="#38b018" />
      </Page>
    </button>
    <button type="button" aria-label="Clear filter" className="w-[43px]">
      <Ico>
        <path d="M3.6.6H11.6L15.4 4V15.4H3.6Z" fill="#e2e2e2" stroke="#bbb" strokeWidth="0.7" />
        <path d="M5 15.4 15.4 7V15.4Z" fill="#fff" />
        <path d="M3.6 15.4H15.4V4" fill="none" stroke="#777" strokeWidth="0.8" />
        <path d="M3.6 15 10 9 7 15Z" fill="#888" />
        <path d="M.6 9.4 7 3.8 10 6.6 4 12.6Z" fill="#cfcff4" stroke="#8d8dc0" strokeWidth="0.8" />
      </Ico>
    </button>
    <button
      type="button"
      aria-label="Expand all"
      aria-pressed="true"
      className="flex items-center justify-center w-[50px] h-[49px] -mt-[6px] bg-[#f7f7f7] border-t-2 border-l-2 border-[#999]"
    >
      <svg viewBox="0 0 24 28" className="w-[24px] h-[28px]">
        <path d="M1 1H23V27H1ZM6 14H18M12 7V21" fill="#fff" stroke="#333" strokeWidth="2" />
      </svg>
    </button>
  </div>
);

const Sidebar = () => (
  <aside className="w-[651px] shrink-0 overflow-hidden bg-[#fafafa]">
    <PaneTitle>Outline</PaneTitle>
    <FilterBar />
    <div className="mr-[12px] pb-[211px] bg-white border-r-2 border-b-2 border-[#e6e6e6]">
      <Tree />
    </div>
    <div className="h-[14px]" />
    <PaneTitle>Details of "Solution"</PaneTitle>
    <div className="flex mr-[12px] pb-[36px] pr-px bg-white border-r-2 border-[#f0f0f0]">
      <svg viewBox="0 0 11 44" aria-hidden="true" className="w-[11px] h-[44px] shrink-0">
        <path d="M-8 12H4V33H-8M-2 22H2" fill="none" stroke="#777" strokeWidth="2" />
      </svg>
      <table className="flex-1 border-collapse border-2 border-[#9a9a9a] text-[28px] leading-[36px] text-[#222]">
        <tbody>
          <tr className="h-[44px]">
            <th colSpan={2} className="pl-[7px] text-left text-[26px] text-[#111] border-2 border-[#9a9a9a] font-['Roboto','Open_Sans',sans-serif]">
              Information
            </th>
          </tr>
          <tr className="h-[44px]">
            <th className="w-[86px] pl-[7px] text-left font-normal border-2 border-[#9a9a9a]">Status</th>
            <td className="w-[539px] pl-[6px] bg-[#e6e5e2] border-2 border-[#9a9a9a]">Solve Required</td>
          </tr>
        </tbody>
      </table>
    </div>
  </aside>
);

/* Viewport */

const Gradient = ({ id, stops }) => (
  <linearGradient id={id}>
    {stops.map(([o, c]) => (
      <stop key={o} offset={o} stopColor={c} />
    ))}
  </linearGradient>
);

const threadRows = Array.from({ length: 20 }, (_, i) => i);

const Scene = () => (
  <svg viewBox="0 0 860 1106" className="w-[860px] h-[1106px] overflow-visible" role="img" aria-label="Bolted assembly">
    <defs>
      <Gradient id="head" stops={[[0, "#3a4432"], [0.15, "#3e4935"], [0.35, "#6b8263"], [0.6, "#93b187"], [0.8, "#a6c99b"], [0.96, "#a3c598"], [1, "#8aa680"]]} />
      <Gradient id="upper" stops={[[0, "#363e45"], [0.16, "#373f46"], [0.19, "#3e454f"], [0.38, "#5f6e7b"], [0.52, "#778694"], [0.66, "#8b9db4"], [0.82, "#97acc1"], [0.93, "#93a8bc"], [1, "#7d919c"]]} />
      <Gradient id="lower" stops={[[0, "#404040"], [0.15, "#424242"], [0.32, "#666"], [0.5, "#8a8a8a"], [0.68, "#a0a0a0"], [0.86, "#b3b3b3"], [0.96, "#aaa"], [1, "#9c9890"]]} />
    </defs>

    <rect x="360" y="96" width="141" height="110" fill="url(#head)" />
    <path d="M360 98H501" stroke="#bfe8a6" strokeWidth="4" />

    <path d="M397 738H459V1009H397L395 1000V748Z" fill="#bdecae" />
    {threadRows.map((i) => {
      const y = 744 + i * 13.4;
      const k = i % 2 ? 4 : 0;
      return (
        <g key={i} fill="none">
          <path d={`M399 ${y + 4}l-4 4 4 4M457 ${y + 2}l4 4-4 4`} stroke="#bdecae" strokeWidth="4" />
          <path d={`M407 ${y + 3}h14M${430 + k} ${y + 9}h16M${444 - k} ${y}h12`} stroke="#8fb587" strokeWidth="2" />
          <path d={`M396 ${y + 6}h8l6 3h9M${415 + k} ${y}h17`} stroke="#50694a" strokeWidth="3" />
          {i % 2 === 0 && <path d={`M432 ${y + 5}h15M454 ${y + 9}h5`} stroke="#50694a" strokeWidth="3" />}
          <path d={`M399 ${y + 11}l5 4`} stroke="#39482f" strokeWidth="2" />
        </g>
      );
    })}
    <path d="M395 742H436L425 745H412L398 750Z" fill="#3a4238" />

    <rect x="184" y="204" width="492" height="270" fill="url(#upper)" />
    <rect x="184" y="474" width="492" height="267" fill="url(#lower)" />
    <path d="M184 203H246M372 206H397M425 206H452M484 204H590M590 206H676M246 205H372" stroke="#bcd6ec" strokeWidth="4" />
    <path d="M360 203H371" stroke="#c6f0a8" strokeWidth="3" />
    <path d="M186 473H394M425 473H433" stroke="#b4d0e8" strokeWidth="4" />
    <path d="M433 475H452M482 475H524M538 475H578M587 475H600M608 475H640M646 475H676" stroke="#d4d8da" strokeWidth="4" />
    <path d="M184 739H194M198 741H396M423 742H452M482 742H512M530 742H558M564 742H608M612 742H636M640 742H674" stroke="#d6d6d0" strokeWidth="3" />

    <g fill="#fff" stroke="#111" strokeWidth="3">
      <rect x="78" y="1007" width="703" height="21" />
      <path d="M78 1007H254V1028H78ZM430 1007H606V1028H430Z" fill="#000" />
    </g>

    <g className="font-['Liberation_Sans',sans-serif]" fontSize="28" fill="#222" textAnchor="middle">
      <text x="75" y="998">0.000</text>
      <text x="427" y="998">15.000</text>
      <text x="738" y="998" textAnchor="start">30.000 (mm)</text>
      <text x="251" y="1059">7.500</text>
      <text x="604" y="1059">22.500</text>
    </g>
  </svg>
);

const OrientationTriad = () => (
  <svg viewBox="0 0 180 215" className="absolute right-[152px] bottom-[4px] w-[180px] h-[215px]" role="img" aria-label="Orientation">
    <defs>
      <radialGradient id="ball" cx="0.6" cy="0.3" r="0.7">
        <stop offset="0" stopColor="#10e6e6" />
        <stop offset="1" stopColor="#056a70" />
      </radialGradient>
      <linearGradient id="green" x2="0" y2="1">
        <stop offset="0" stopColor="#005000" />
        <stop offset="0.5" stopColor="#008a08" />
        <stop offset="1" stopColor="#004400" />
      </linearGradient>
      <linearGradient id="red" x2="0" y2="1">
        <stop offset="0" stopColor="#e80000" />
        <stop offset="0.6" stopColor="#d00000" />
        <stop offset="1" stopColor="#600000" />
      </linearGradient>
    </defs>
    <g className="font-['Liberation_Sans',sans-serif]" fontSize="30">
      <text x="7" y="33" fill="#18b830">Y</text>
      <text x="108" y="30" fontSize="26" fill="#ff3030">X</text>
      <text x="146" y="204" fill="#2828ff">Z</text>
    </g>
    <path d="M56 27H115V38H56Z" fill="url(#green)" />
    <path d="M26 32 58 18V48Z" fill="url(#green)" />
    <path d="M146 30H155V145H146Z" fill="#0000b8" />
    <path d="M146 30V145" stroke="#000050" strokeWidth="2" />
    <path d="M137 143H164L151 181Z" fill="#000080" />
    <path d="M130 27H152L155 32 148 38H130Z" fill="url(#red)" />
    <path d="M111 33 118 20 128 17 136 28 137 36 130 47H118Z" fill="url(#red)" />
    <ellipse cx="76" cy="102" rx="13" ry="15" fill="url(#ball)" />
  </svg>
);

const line = { fill: "none", stroke: "#222", strokeWidth: 3 };

const Tabs = () => (
  <div role="tablist" className="flex h-[42px] text-[26px] leading-[36px] border-b-[3px] border-[#333] bg-[#efefef]">
    <svg viewBox="0 0 21 39" aria-hidden="true" className="w-[21px] h-[39px] shrink-0">
      <path d="M0 0H21V39H16Z" fill="#fff" />
      <path d="M0 0 16 39" {...line} />
    </svg>
    <button type="button" role="tab" aria-selected="true" className="h-full w-[118px] pt-[4px] bg-white text-left font-bold text-[#111] font-['Roboto','Open_Sans',sans-serif]">
      Geometry
    </button>
    <svg viewBox="0 0 25 39" aria-hidden="true" className="w-[25px] h-[39px] shrink-0 overflow-visible">
      <path d="M0 0H18L2 39H0Z" fill="#fff" />
      <path d="M2 39 18 1H25M10 20 19 39" {...line} />
    </svg>
    <button type="button" role="tab" aria-selected="false" className="h-full w-[137px] pt-[2px] border-t-[3px] border-[#222] whitespace-nowrap text-left text-[#222]">
      Print Preview
    </button>
    <svg viewBox="0 0 27 39" aria-hidden="true" className="w-[27px] h-[39px] shrink-0 overflow-visible">
      <path d="M0 1H27M4 1 21 39M1 39 12 20" {...line} />
    </svg>
    <button type="button" role="tab" aria-selected="false" className="h-full w-[159px] pt-[2px] border-t-[3px] border-[#222] whitespace-nowrap text-left text-[#222]">
      Report Preview
    </button>
    <svg viewBox="0 0 19 39" aria-hidden="true" className="w-[19px] h-[39px] shrink-0 overflow-visible">
      <path d="M0 1H19M18 1 1 39" {...line} />
    </svg>
    <div className="flex-1 border-t-[3px] border-r-[3px] border-[#222]" />
  </div>
);

const Viewport = () => (
  <main className="flex-1 min-w-0 border-t-[3px] border-l-[3px] border-[#6e6e6e]">
    <div className="relative flex justify-center bg-linear-to-b from-[#6787df] to-white">
      <Scene />
      <div className="absolute right-[37px] top-[10px] text-right text-white">
        <div className="text-[57px] leading-[64px] font-bold font-['Open_Sans_Condensed','Open_Sans',sans-serif]">ANSYS</div>
        <div className="pt-[3px] text-[28px] leading-[20px] text-[#e8edfb]">R14.5</div>
      </div>
      <OrientationTriad />
    </div>
    <Tabs />
  </main>
);

const App = () => {
  return (
    <div className={clsx("min-h-screen bg-white pl-[47px] pr-[64px] pt-[53px]", UI)}>
      <Toolbars />
      <div className="flex">
        <Sidebar />
        <Viewport />
      </div>
    </div>
  );
};

export default App;
